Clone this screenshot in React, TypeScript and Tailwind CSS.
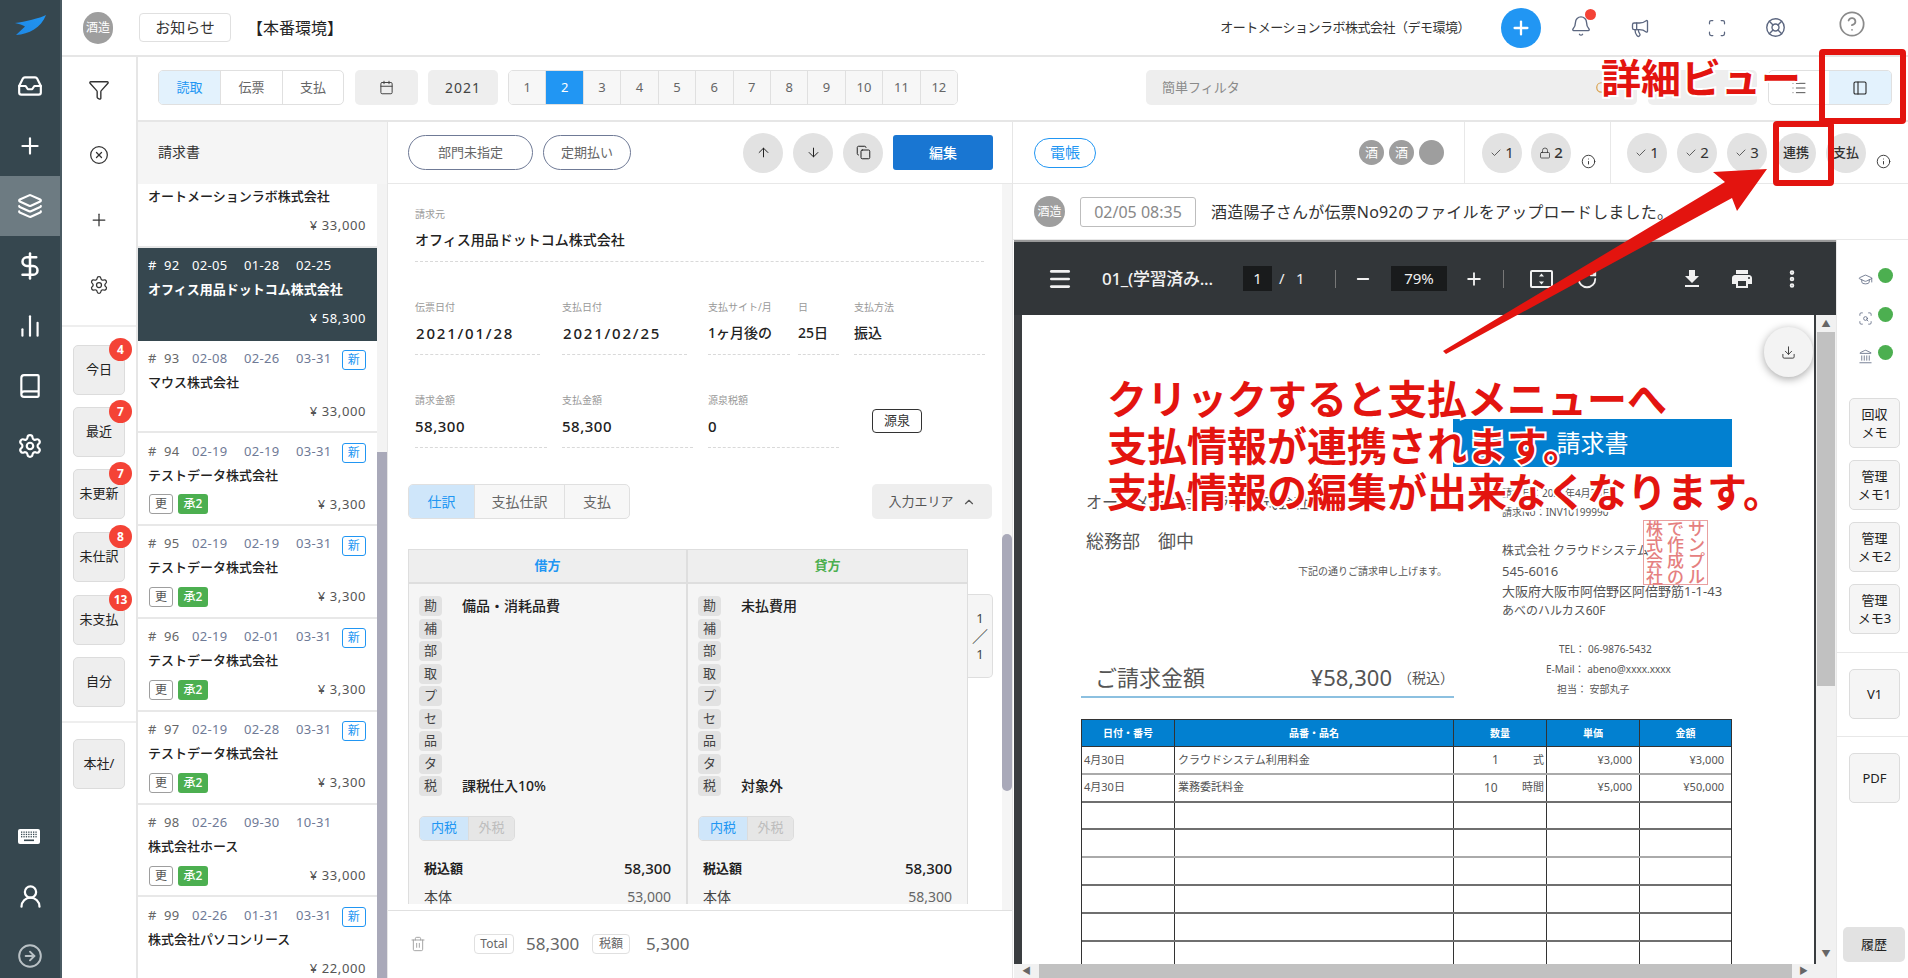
import React from "react";
import {
  Inbox, Plus, Layers, DollarSign, ChartNoAxesColumn, Book, Settings, UserRound, CircleArrowRight,
  Funnel, CircleX, Calendar, ArrowUp, ArrowDown, Copy, ChevronUp, Trash2, Bell, Megaphone, Scan, LifeBuoy,
  CircleHelp, List, PanelLeft, Check, Lock, Info, GraduationCap, ScanSearch, Landmark, Download, Menu, Minus,
  RotateCw, EllipsisVertical, Search,
} from "lucide-react";

const Logo = () => (
  <svg width="31" height="20" viewBox="0 0 31 20">
    <defs>
      <linearGradient id="lg" x1="0" y1="1" x2="1" y2="0">
        <stop offset="0" stopColor="#1e88e5" />
        <stop offset="1" stopColor="#2196f3" />
      </linearGradient>
    </defs>
    <path d="M31 0C25 3 10 7 0 8c4 1 8 2 10 3.500L1 20C14 19 26 13 31 0Z" fill="url(#lg)" />
  </svg>
);

const KeyboardIcon = () => (
  <svg width="22" height="15" viewBox="0 0 22 15">
    <rect width="22" height="15" rx="2" fill="#ffffff" />
    {[0, 1, 2].map((r) =>
      [0, 1, 2, 3, 4, 5, 6].map((c) => (
        <rect key={`${r}-${c}`} x={3 + c * 2.4} y={2.5 + r * 2.3} width="1.300" height="1.300" fill="#36474f" />
      ))
    )}
    <rect x="6" y="10.500" width="10" height="1.600" fill="#36474f" />
  </svg>
);

const railTop = [Inbox, Plus, Layers, DollarSign, ChartNoAxesColumn, Book, Settings];

function Rail() {
  return (
    <div className="w-[62px] shrink-0 bg-[#36474f] border-r-2 border-r-[#4a5a62] flex flex-col text-white">
      <div className="h-[56px] flex items-center justify-center pb-[6px]"><Logo /></div>
      {railTop.map((I, i) => (
        <div key={i} className={`h-[60px] flex items-center justify-center ${i === 2 ? "bg-[#6d7b82]" : ""}`}>
          <I size={i === 3 ? 30 : 26} strokeWidth={2} />
        </div>
      ))}
      <div className="mt-auto h-[60px] flex items-center justify-center pr-[2px]"><KeyboardIcon /></div>
      <div className="h-[60px] flex items-center justify-center"><UserRound size={27} strokeWidth={2} /></div>
      <div className="h-[52px] flex justify-center pt-[17px] text-[#b9c1c5]"><CircleArrowRight size={26} strokeWidth={1.8} /></div>
    </div>
  );
}

function TopHeader() {
  return (
    <div className="h-[57px] shrink-0 border-b-2 border-[#e6e6e6] flex items-center bg-white">
      <div className="ml-[21px] w-[30px] h-[32px] rounded-full bg-[#9e9e9e] text-white text-[12px] flex items-center justify-center">酒造</div>
      <div className="ml-[26px] w-[92px] h-[29px] border border-[#e0e0e0] rounded-[4px] text-[15px] text-[#333] flex items-center justify-center">お知らせ</div>
      <div className="ml-[16px] w-[96px] text-[16px] text-[#222] whitespace-nowrap">【本番環境】</div>
      <div className="ml-auto text-[13px] text-[#333] tracking-[-0.5px] mr-[31px]">オートメーションラボ株式会社（デモ環境）</div>
      <div className="w-[40px] h-[40px] rounded-full bg-[#2196f3] text-white flex items-center justify-center"><Plus size={22} strokeWidth={2.5} /></div>
      <div className="ml-[29px] mb-[3px] relative text-[#5c6780]">
        <Bell size={22} strokeWidth={1.5} />
        <span className="absolute -top-[6px] left-[15px] w-[11px] h-[11px] rounded-full bg-[#f44336]" />
      </div>
      <Megaphone size={20} strokeWidth={1.6} className="ml-[38px] text-[#5c6780]" />
      <Scan size={20} strokeWidth={1.5} className="ml-[57px] text-[#5c6780]" />
      <LifeBuoy size={21} strokeWidth={1.6} className="ml-[38px] text-[#5c6780]" />
      <CircleHelp size={28} strokeWidth={1.5} className="ml-[52px] mr-[42px] mb-[8px] text-[#8a8a8a]" />
    </div>
  );
}

const filters: [string, number | null, string][] = [
  ["今日", 4, "mt-[18px]"],
  ["最近", 7, "mt-[12px]"],
  ["未更新", 7, "mt-[12px]"],
  ["未仕訳", 8, "mt-[13px]"],
  ["未支払", 13, "mt-[13px]"],
  ["自分", null, "mt-[12px]"],
];

function FilterBtn({ label, n, cls }: { label: string; n: number | null; cls: string }) {
  return (
    <div className={`relative w-[52px] h-[50px] bg-[#eeeeee] border border-[#dcdcdc] rounded-[5px] text-[13px] text-[#222] flex items-center justify-center ${cls}`}>
      {label}
      {n !== null && (
        <span className="absolute -top-[8px] -right-[8px] w-[23px] h-[23px] rounded-full bg-[#f44336] text-white text-[12px] font-bold flex items-center justify-center">{n}</span>
      )}
    </div>
  );
}

function SideFilters() {
  return (
    <div className="w-[76px] shrink-0 border-r-2 border-[#e6e6e6] flex flex-col">
      <div className="h-[270px] border-b-2 border-[#eeeeee] flex flex-col items-center text-[#333] shrink-0">
        <div className="h-[65px] flex items-center justify-center"><Funnel size={22} strokeWidth={1.5} /></div>
        <div className="h-[65px] flex items-center justify-center"><CircleX size={20} strokeWidth={1.5} /></div>
        <div className="h-[66px] flex items-center justify-center"><Plus size={20} strokeWidth={1.5} /></div>
        <div className="h-[64px] flex items-center justify-center"><Settings size={20} strokeWidth={1.5} /></div>
      </div>
      <div className="pl-[11px] h-[396px] border-b-2 border-[#eeeeee] shrink-0">
        {filters.map(([l, n, c]) => <FilterBtn key={l} label={l} n={n} cls={c} />)}
      </div>
      <div className="pl-[11px]"><FilterBtn label="本社/" n={null} cls="mt-[16px]" /></div>
    </div>
  );
}

function Toolbar() {
  return (
    <div className="h-[65px] shrink-0 border-b-2 border-[#e6e6e6] flex items-center pb-[2px] text-[13px]">
      <div className="ml-[20px] flex h-[35px] w-[186px] border border-[#e0e0e0] rounded-[5px] overflow-hidden text-[#666]">
        <div className="w-[62px] bg-[#e3f2fd] text-[#2196f3] flex items-center justify-center border-r border-[#e0e0e0]">読取</div>
        <div className="w-[62px] flex items-center justify-center border-r border-[#e0e0e0]">伝票</div>
        <div className="flex-1 flex items-center justify-center">支払</div>
      </div>
      <div className="ml-[11px] w-[63px] h-[35px] rounded-[5px] bg-[#eeeeee] flex items-center justify-center text-[#444]"><Calendar size={15} strokeWidth={1.6} /></div>
      <div className="ml-[10px] w-[70px] h-[35px] rounded-[5px] bg-[#eeeeee] flex items-center justify-center text-[#444] tracking-[1px] text-[14px]">2021</div>
      <div className="ml-[10px] flex h-[35px] w-[450px] border border-[#e0e0e0] rounded-[5px] overflow-hidden text-[#666]">
        {Array.from({ length: 12 }, (_, i) => (
          <div key={i} className={`flex-1 flex items-center justify-center border-r last:border-r-0 border-[#e0e0e0] ${i === 1 ? "bg-[#2196f3] text-white" : "bg-[#f7f7f7]"}`}>{i + 1}</div>
        ))}
      </div>
      <div className="ml-[188px] w-[491px] h-[35px] rounded-[5px] bg-[#eeeeee] flex items-center pl-[16px] pr-[28px] text-[#8a8a8a]">
        簡単フィルタ
        <Search size={14} strokeWidth={2} className="ml-auto text-[#d9a04a]" />
      </div>
      <div className="ml-[11px] w-[109px] h-[35px] rounded-[5px] bg-[#eeeeee]" />
      <div className="ml-[11px] flex h-[35px] w-[124px] border border-[#e0e0e0] rounded-[5px] overflow-hidden">
        <div className="w-[60px] flex items-center justify-center text-[#555]"><List size={16} strokeWidth={1.5} /></div>
        <div className="flex-1 bg-[#e3f2fd] flex items-center justify-center text-[#222]"><PanelLeft size={16} strokeWidth={1.6} /></div>
      </div>
    </div>
  );
}

type Item = { no: number; d: [string, string, string]; name: string; amt: string; isNew?: boolean; chips?: boolean; partial?: boolean };
const items: Item[] = [
  { no: 93, d: ["02-08", "02-26", "03-31"], name: "マウス株式会社", amt: "33,000", isNew: true },
  { no: 94, d: ["02-19", "02-19", "03-31"], name: "テストデータ株式会社", amt: "3,300", isNew: true, chips: true },
  { no: 95, d: ["02-19", "02-19", "03-31"], name: "テストデータ株式会社", amt: "3,300", isNew: true, chips: true },
  { no: 96, d: ["02-19", "02-01", "03-31"], name: "テストデータ株式会社", amt: "3,300", isNew: true, chips: true },
  { no: 97, d: ["02-19", "02-28", "03-31"], name: "テストデータ株式会社", amt: "3,300", isNew: true, chips: true },
  { no: 98, d: ["02-26", "09-30", "10-31"], name: "株式会社ホース", amt: "33,000", chips: true },
  { no: 99, d: ["02-26", "01-31", "03-31"], name: "株式会社パソコンリース", amt: "22,000", isNew: true },
];

function ListItem({ it, sel }: { it: Item; sel?: boolean }) {
  return (
    <div className={`h-[92.8px] shrink-0 px-[10px] pr-[11px] pt-[8px] border-b-2 ${sel ? "bg-[#36474f] border-[#36474f] text-white" : "border-[#e8e8e8] text-[#222]"}`}>
      <div className={`h-[20px] flex items-center text-[13px] tracking-[0.3px] ${sel ? "text-white" : "text-[#6f7a96]"}`}>
        {!it.partial && (
          <>
            <span className={`w-[44px] whitespace-pre ${sel ? "" : "text-[#666]"}`}>#  {it.no}</span>
            <span className="w-[52px]">{it.d[0]}</span>
            <span className="w-[52px]">{it.d[1]}</span>
            <span>{it.d[2]}</span>
          </>
        )}
        {it.isNew && <span className="ml-auto w-[24px] h-[20px] mt-[3px] border border-[#2196f3] rounded-[3px] text-[#2196f3] text-[12px] flex items-center justify-center">新</span>}
      </div>
      <div className={`mt-[4px] h-[20px] flex items-center text-[13px] ${sel ? "font-bold" : "font-medium"}`}>{it.name}</div>
      <div className="mt-[9px] h-[20px] flex items-center">
        {it.chips && (
          <>
            <span className="ml-[1px] w-[24px] h-[20px] border border-[#9e9e9e] rounded-[3px] text-[#555] text-[12px] flex items-center justify-center">更</span>
            <span className="ml-[5px] w-[30px] h-[20px] rounded-[3px] bg-[#4caf50] text-white text-[12px] font-medium flex items-center justify-center">承2</span>
          </>
        )}
        <span className={`ml-auto text-[13px] tracking-[0.6px] whitespace-pre ${sel ? "text-white" : "text-[#555]"}`}>¥ {it.amt}</span>
      </div>
    </div>
  );
}

function ListPanel() {
  return (
    <div className="w-[250px] shrink-0 flex flex-col border-r border-[#e6e6e6]">
      <div className="h-[62px] shrink-0 bg-[#f5f5f5] flex items-center pl-[20px] text-[14px] text-[#333] pb-[4px]">請求書</div>
      <div className="flex-1 flex overflow-hidden">
        <div className="w-[239px] shrink-0 overflow-hidden flex flex-col">
          <div className="-mt-[29px]">
            <ListItem it={{ no: 91, d: ["", "", ""], name: "オートメーションラボ株式会社", amt: "33,000", partial: true }} />
          </div>
          <ListItem sel it={{ no: 92, d: ["02-05", "01-28", "02-25"], name: "オフィス用品ドットコム株式会社", amt: "58,300" }} />
          {items.map((it) => <ListItem key={it.no} it={it} />)}
        </div>
        <div className="w-[10px] bg-[#f3f3f3] flex flex-col">
          <div className="h-[268px] shrink-0" />
          <div className="flex-1 bg-[#a9a9b9]" />
        </div>
      </div>
    </div>
  );
}

function Field({ label, value, w, cls = "", vcls = "" }: { label: string; value: string; w: string; cls?: string; vcls?: string }) {
  return (
    <div className={`${w} ${cls} border-b border-dashed border-[#d9d9d9] h-[55px] shrink-0`}>
      <div className="h-[14px] text-[10px] leading-[14px] text-[#999]">{label}</div>
      <div className={`mt-[9px] h-[20px] text-[14px] leading-[20px] font-medium text-[#222] whitespace-nowrap ${vcls}`}>{value}</div>
    </div>
  );
}

const chips = ["勘", "補", "部", "取", "プ", "セ", "品", "タ", "税"];

function SideCol({ head, color, a, b, tax, body, left }: { head: string; color: string; a: string; b: string; tax: string; body: string; left?: boolean }) {
  return (
    <div className={`w-[280px] ${left ? "border-r-2 border-[#dedede]" : ""}`}>
      <div className={`h-[34px] bg-[#eeeeee] border-b-2 border-[#dedede] text-[13px] font-bold flex items-center justify-center ${color}`}>{head}</div>
      <div className="pl-[10px] pr-[14px] pt-[12px] h-[320px] bg-[#f5f5f5] overflow-hidden">
        {chips.map((c, i) => (
          <div key={c} className="h-[22.500px] flex items-start">
            <span className="w-[23px] h-[20px] rounded-[4px] bg-[#e2e2e2] text-[#444] text-[13px] flex items-center justify-center">{c}</span>
            {i === 0 && <span className="ml-[20px] text-[14px] font-medium leading-[20px] text-[#222]">{a}</span>}
            {i === 8 && <span className="ml-[20px] text-[14px] font-medium leading-[20px] text-[#222]">{b}</span>}
          </div>
        ))}
        <div className="mt-[17px] flex w-[96px] h-[25px] border border-[#dcdcdc] rounded-[5px] overflow-hidden text-[13px]">
          <div className="w-[48px] bg-[#cfe6fa] text-[#2196f3] flex items-center justify-center">内税</div>
          <div className="flex-1 bg-[#e6e6e6] text-[#bdbdbd] flex items-center justify-center border-l border-[#dcdcdc]">外税</div>
        </div>
        <div className="mt-[18px] h-[20px] pl-[5px] pr-[1px] flex items-center justify-between text-[13px] font-medium text-[#222]">
          <span className="font-bold">税込額</span><span className="text-[15px]">{tax}</span>
        </div>
        <div className="mt-[8px] h-[20px] pl-[5px] pr-[1px] flex items-center justify-between text-[14px] text-[#444]">
          <span>本体</span><span className="text-[#666]">{body}</span>
        </div>
      </div>
    </div>
  );
}

function DetailPanel() {
  return (
    <div className="w-[625px] shrink-0 flex flex-col border-r border-[#e6e6e6]">
      <div className="h-[62px] shrink-0 border-b border-[#e8e8e8] flex items-center pl-[20px] pr-[19px]">
        <div className="w-[125px] h-[35px] rounded-full border border-[#6f7a96] text-[13px] text-[#666] flex items-center justify-center">部門未指定</div>
        <div className="ml-[10px] w-[88px] h-[35px] rounded-full border border-[#6f7a96] text-[13px] text-[#666] flex items-center justify-center">定期払い</div>
        {[ArrowUp, ArrowDown, Copy].map((I, i) => (
          <div key={i} className={`${i === 0 ? "ml-auto" : "ml-[10px]"} w-[40px] h-[40px] rounded-full bg-[#e2e2e2] flex items-center justify-center text-[#222]`}><I size={15} strokeWidth={1.6} /></div>
        ))}
        <div className="ml-[10px] w-[100px] h-[35px] rounded-[3px] bg-[#1976d2] text-white text-[14px] font-medium flex items-center justify-center">編集</div>
      </div>
      <div className="flex-1 flex overflow-hidden">
        <div className="flex-1 overflow-hidden relative">
          <div className="pl-[27px] pr-[18px] pt-[23px]">
            <Field label="請求元" value="オフィス用品ドットコム株式会社" w="w-full" />
            <div className="mt-[38px] flex">
              <Field label="伝票日付" value="2021/01/28" w="w-[125px]" vcls="text-[15px] tracking-[1.8px] pl-[1px]" />
              <Field label="支払日付" value="2021/02/25" w="w-[125px]" cls="ml-[22px]" vcls="text-[15px] tracking-[1.8px] pl-[1px]" />
              <Field label="支払サイト/月" value="1ヶ月後の" w="w-[82px]" cls="ml-[21px]" />
              <Field label="日" value="25日" w="w-[41px]" cls="ml-[8px]" />
              <Field label="支払方法" value="振込" w="w-[131px]" cls="ml-[15px]" />
            </div>
            <div className="mt-[38px] flex">
              <Field label="請求金額" value="58,300" w="w-[132px]" vcls="text-[15px] tracking-[0.5px]" />
              <Field label="支払金額" value="58,300" w="w-[131px]" cls="ml-[15px]" vcls="text-[15px] tracking-[0.5px]" />
              <Field label="源泉税額" value="0" w="w-[131px]" cls="ml-[15px]" vcls="text-[15px]" />
              <div className="ml-[33px] mt-[16px] w-[50px] h-[24px] border border-[#333] rounded-[4px] text-[13px] text-[#333] flex items-center justify-center">源泉</div>
            </div>
          </div>
          <div className="mt-[36px] ml-[20px] mr-[10px] flex justify-between">
            <div className="flex w-[222px] h-[35px] border border-[#e0e0e0] rounded-[5px] overflow-hidden text-[14px] text-[#666] bg-[#f7f7f7]">
              <div className="w-[65px] bg-[#cfe6fa] text-[#2196f3] flex items-center justify-center">仕訳</div>
              <div className="w-[91px] flex items-center justify-center border-x border-[#e0e0e0]">支払仕訳</div>
              <div className="flex-1 flex items-center justify-center">支払</div>
            </div>
            <div className="w-[120px] h-[35px] rounded-[5px] bg-[#eeeeee] text-[13px] text-[#555] flex items-center justify-center gap-[8px]">入力エリア<ChevronUp size={14} /></div>
          </div>
          <div className="relative mt-[30px] ml-[20px] flex w-[560px] border-t border-x border-[#dedede]">
            <SideCol left head="借方" color="text-[#2196f3]" a="備品・消耗品費" b="課税仕入10%" tax="58,300" body="53,000" />
            <SideCol head="貸方" color="text-[#4caf50]" a="未払費用" b="対象外" tax="58,300" body="58,300" />
            <div className="absolute -right-[26px] top-[44px] w-[25px] h-[84px] bg-[#f5f5f5] border border-l-0 border-[#dedede] rounded-r-[5px] text-[13px] text-[#444] flex flex-col items-center justify-center leading-[18px]">
              <span>1</span><span className="text-[16px]">／</span><span>1</span>
            </div>
          </div>
        </div>
        <div className="w-[10px] bg-[#f5f5f5] flex flex-col">
          <div className="h-[350px] shrink-0" />
          <div className="h-[257px] bg-[#a9a9b9] rounded-full" />
        </div>
      </div>
      <div className="h-[68px] shrink-0 border-t border-[#e0e0e0] flex items-center pl-[22px] pb-[2px] text-[#666]">
        <Trash2 size={16} strokeWidth={1.4} className="text-[#9e9e9e]" />
        <div className="ml-[48px] w-[40px] h-[20px] border border-[#e0e0e0] rounded-[4px] text-[12px] flex items-center justify-center">Total</div>
        <div className="ml-[12px] text-[17px] w-[55px] whitespace-nowrap">58,300</div>
        <div className="ml-[11px] w-[38px] h-[20px] border border-[#e0e0e0] rounded-[4px] text-[12px] flex items-center justify-center">税額</div>
        <div className="ml-[16px] text-[17px]">5,300</div>
      </div>
    </div>
  );
}

const Round = ({ children, cls = "" }: { children: React.ReactNode; cls?: string }) => (
  <div className={`w-[40px] h-[40px] rounded-full bg-[#e2e2e2] flex items-center justify-center text-[13px] text-[#333] gap-[3px] shrink-0 ${cls}`}>{children}</div>
);

function ActionRow() {
  return (
    <div className="h-[62px] shrink-0 border-b border-[#e8e8e8] flex items-center">
      <div className="ml-[21px] w-[62px] h-[30px] rounded-full border border-[#2196f3] text-[#2196f3] text-[15px] flex items-center justify-center">電帳</div>
      <div className="ml-auto flex items-center gap-[5px] mr-[20px]">
        <span className="w-[25px] h-[25px] rounded-full bg-[#9e9e9e] text-white text-[13px] flex items-center justify-center">酒</span>
        <span className="w-[25px] h-[25px] rounded-full bg-[#9e9e9e] text-white text-[13px] flex items-center justify-center">酒</span>
        <span className="w-[25px] h-[25px] rounded-full bg-[#9e9e9e]" />
      </div>
      <div className="w-[147px] h-full border-x border-[#e8e8e8] flex items-center pl-[17px] relative shrink-0">
        <Round cls="text-[15px]"><Check size={12} strokeWidth={1.5} />1</Round>
        <Round cls="ml-[9px] text-[15px] font-medium"><Lock size={12} strokeWidth={1.5} />2</Round>
        <Info size={15} strokeWidth={1.5} className="ml-[10px] mt-[17px] text-[#333]" />
      </div>
      <div className="w-[297px] h-full flex items-center pl-[16px] shrink-0">
        <Round cls="text-[15px]"><Check size={12} strokeWidth={1.5} />1</Round>
        <Round cls="ml-[10px] text-[15px]"><Check size={12} strokeWidth={1.5} />2</Round>
        <Round cls="ml-[10px] text-[15px]"><Check size={12} strokeWidth={1.5} />3</Round>
        <Round cls="ml-[9px] font-medium">連携</Round>
        <Round cls="ml-[10px] font-medium">支払</Round>
        <Info size={15} strokeWidth={1.5} className="ml-[10px] mt-[17px] text-[#333]" />
      </div>
    </div>
  );
}

function LogRow() {
  return (
    <div className="h-[56px] shrink-0 border-b border-[#e8e8e8] flex items-center pl-[21px]">
      <div className="w-[31px] h-[31px] rounded-full bg-[#9e9e9e] text-white text-[12px] flex items-center justify-center">酒造</div>
      <div className="ml-[15px] w-[116px] h-[30px] border border-[#bdbdbd] rounded-[3px] text-[16px] text-[#888] flex items-center justify-center whitespace-nowrap">02/05 08:35</div>
      <div className="ml-[15px] text-[16px] text-[#333] tracking-[0.2px] whitespace-nowrap">酒造陽子さんが伝票No92のファイルをアップロードしました。</div>
    </div>
  );
}

const FitIcon = () => (
  <svg width="23" height="18" viewBox="0 0 23 18" fill="none">
    <rect x="1" y="1" width="21" height="16" rx="1" stroke="#f1f1f1" strokeWidth="2" />
    <path d="M11.500 3.500l2.500 3h-5zM11.500 14.500l2.500-3h-5z" fill="#f1f1f1" />
  </svg>
);

const DownloadFilled = () => (
  <svg width="24" height="24" viewBox="0 0 24 24" fill="#f1f1f1"><path d="M19 9h-4V3H9v6H5l7 7 7-7zM5 18v2h14v-2H5z" /></svg>
);

const PrintFilled = () => (
  <svg width="24" height="24" viewBox="0 0 24 24" fill="#f1f1f1">
    <path d="M19 8H5c-1.660 0-3 1.340-3 3v6h4v4h12v-4h4v-6c0-1.660-1.340-3-3-3zm-3 11H8v-5h8v5zm3-7c-.55 0-1-.45-1-1s.45-1 1-1 1 .45 1 1-.45 1-1 1zm-1-9H6v4h12V3z" />
  </svg>
);

function PdfBar() {
  return (
    <div className="h-[73px] shrink-0 bg-[#323639] text-[#f1f1f1] flex items-center relative">
      <Menu size={26} strokeWidth={2.5} className="ml-[33px] shrink-0" />
      <span className="ml-[29px] w-[129px] shrink-0 text-[17px] font-medium whitespace-nowrap tracking-[-0.3px]">01_(学習済み...</span>
      <span className="ml-[12px] w-[29px] h-[25px] shrink-0 bg-[#191b1c] flex items-center justify-center text-[15px]">1</span>
      <span className="ml-[7px] w-[5px] shrink-0 text-[15px]">/</span>
      <span className="ml-[12px] w-[8px] shrink-0 text-[15px]">1</span>
      <span className="ml-[31px] w-px h-[18px] shrink-0 bg-[#777]" />
      <Minus size={18} strokeWidth={2.5} className="ml-[18px] shrink-0" />
      <span className="ml-[19px] w-[56px] h-[25px] shrink-0 bg-[#191b1c] flex items-center justify-center text-[15px]">79%</span>
      <Plus size={20} strokeWidth={2.2} className="ml-[17px] shrink-0" />
      <span className="ml-[19px] w-px h-[18px] shrink-0 bg-[#777]" />
      <span className="ml-[26px] shrink-0"><FitIcon /></span>
      <RotateCw size={22} strokeWidth={2} className="ml-[23px] shrink-0" />
      <span className="ml-[82px] shrink-0"><DownloadFilled /></span>
      <span className="ml-[26px] shrink-0"><PrintFilled /></span>
      <EllipsisVertical size={22} strokeWidth={3} className="ml-[27px] shrink-0" />
    </div>
  );
}

const rows: [string, string, string, string, string, string][] = [
  ["4月30日", "クラウドシステム利用料金", "1", "式", "¥3,000", "¥3,000"],
  ["4月30日", "業務委託料金", "10", "時間", "¥5,000", "¥50,000"],
  ["", "", "", "", "", ""], ["", "", "", "", "", ""], ["", "", "", "", "", ""],
  ["", "", "", "", "", ""], ["", "", "", "", "", ""], ["", "", "", "", "", ""],
];

function InvoiceTable() {
  return (
    <div className="mt-[20px] w-[651px] border-x border-[#333] text-[11px] text-[#555]">
      <div className="h-[28px] flex bg-[#0280d0] border-y border-[#333] text-white font-bold text-[10px]">
        {[["日付・番号", "w-[93px]"], ["品番・品名", "w-[279px]"], ["数量", "w-[93px]"], ["単価", "w-[93px]"], ["金額", "flex-1"]].map(([t, w]) => (
          <div key={t} className={`${w} flex items-center justify-center border-r last:border-r-0 border-[#333]`}>{t}</div>
        ))}
      </div>
      {rows.map((r, i) => (
        <div key={i} className={`h-[27.800px] flex border-b-2 ${i === 0 || i === 3 ? "border-[#aaaaaa]" : "border-[#6f6f6f]"}`}>
          <div className="w-[93px] pl-[2px] flex items-center border-r border-[#333]">{r[0]}</div>
          <div className="w-[279px] pl-[3px] flex items-center border-r border-[#333]">{r[1]}</div>
          <div className="w-[93px] flex items-center border-r border-[#333]">
            <span className={`${i === 1 ? "ml-[30px]" : "ml-[38px]"} text-[12px]`}>{r[2]}</span>
            <span className="ml-auto pr-[2px]">{r[3]}</span>
          </div>
          <div className="w-[93px] pr-[7px] flex items-center justify-end border-r border-[#333]">{r[4]}</div>
          <div className="flex-1 pr-[7px] flex items-center justify-end">{r[5]}</div>
        </div>
      ))}
    </div>
  );
}

function Invoice() {
  return (
    <div className="flex-1 bg-white relative overflow-hidden pl-[59px] text-[#555]">
      <div className="absolute right-[1px] top-[12px] w-[49px] h-[50px] rounded-full bg-[#f3f3f3] shadow-[0_2px_8px_rgba(0,0,0,0.35)] flex items-center justify-center text-[#444]"><Download size={15} strokeWidth={1.6} /></div>
      <div className="ml-[372px] mt-[104px] w-[279px] h-[48px] bg-[#0280d0] text-white text-[24px] flex items-center justify-center">請求書</div>
      <div className="flex">
        <div className="w-[421px] shrink-0">
          <div className="mt-[23px] ml-[5px] h-[24px] text-[16px] leading-[24px] whitespace-nowrap">オートメーションラボ株式会社</div>
          <div className="mt-[15px] ml-[5px] h-[24px] text-[18px] leading-[24px]">総務部　御中</div>
          <div className="mt-[11px] ml-[217px] h-[14px] text-[10px] leading-[14px] whitespace-nowrap">下記の通りご請求申し上げます。</div>
          <div className="mt-[84px] w-[373px] h-[36px] border-b-2 border-[#8cc0e0] flex items-center pl-[14px] pb-[3px] whitespace-nowrap">
            <span className="text-[22px] w-[219px]">ご請求金額</span>
            <span className="text-[22px]">¥58,300</span>
            <span className="ml-[6px] text-[14px]">（税込）</span>
          </div>
        </div>
        <div className="relative text-[12px] leading-[20px]">
          <div className="mt-[16px] h-[19px] text-[10px]">請求日：2021年4月30日</div>
          <div className="h-[19px] text-[10px]">請求No：INV10199990</div>
          <div className="mt-[20px] h-[20px]">株式会社 クラウドシステム</div>
          <div className="h-[20px] text-[13px]">545-6016</div>
          <div className="h-[20px] text-[13px] whitespace-nowrap">大阪府大阪市阿倍野区阿倍野筋1-1-43</div>
          <div className="h-[20px]">あべのハルカス60F</div>
          <div className="mt-[18px] ml-[57px] h-[20px] text-[10px]">TEL： 06-9876-5432</div>
          <div className="ml-[44px] h-[20px] text-[10px] whitespace-nowrap">E-Mail： abeno@xxxx.xxxx</div>
          <div className="ml-[55px] h-[20px] text-[10px]">担当： 安部丸子</div>
          <div className="absolute left-[141px] top-[53px] w-[65px] h-[65px] border border-[#e9a0a0] text-[#e58080] text-[17px] leading-[16px] font-medium grid grid-cols-3 place-items-center">
            {["株", "で", "サ", "式", "作", "ン", "会", "成", "プ", "社", "の", "ル"].map((c, i) => <span key={i}>{c}</span>)}
          </div>
        </div>
      </div>
      <InvoiceTable />
    </div>
  );
}

function PdfView() {
  return (
    <div className="w-[822px] ml-[1px] shrink-0 flex flex-col border-t-2 border-[#999] overflow-hidden">
      <PdfBar />
      <div className="flex-1 flex overflow-hidden bg-[#3a3d40]">
        <div className="w-[8px] shrink-0" />
        <Invoice />
        <div className="w-[2px] shrink-0" />
        <div className="w-[20px] shrink-0 bg-[#f1f1f1] flex flex-col items-center text-[#666] text-[9px] leading-[17px]">
          <span>▲</span>
          <div className="w-[18px] h-[354px] bg-[#c1c1c1]" />
          <span className="mt-auto mb-[2px]">▼</span>
        </div>
      </div>
      <div className="h-[14px] shrink-0 bg-[#f1f1f1] flex items-center text-[#666] text-[9px]">
        <span className="w-[25px] text-center">◀</span>
        <div className="w-[753px] h-[14px] bg-[#c1c1c1]" />
        <span className="ml-[7px]">▶</span>
      </div>
    </div>
  );
}

const Memo = ({ children, cls = "" }: { children: React.ReactNode; cls?: string }) => (
  <div className={`w-[51px] h-[50px] bg-[#f5f5f5] border border-[#dcdcdc] rounded-[5px] text-[13px] text-[#222] leading-[18px] flex items-center justify-center text-center ${cls}`}>{children}</div>
);

function StatusRail() {
  const st = [GraduationCap, ScanSearch, Landmark];
  return (
    <div className="flex-1 border-l border-[#e8e8e8] flex flex-col items-start">
      <div className="pt-[27px] pl-[21px] h-[158px] shrink-0">
        {st.map((I, i) => (
          <div key={i} className="h-[38.500px] flex items-start gap-[5px]">
            <I size={15} strokeWidth={1.3} className="text-[#5c6780] mt-[5px]" />
            <span className="w-[15px] h-[15px] rounded-full bg-[#4caf50] mt-[1px]" />
          </div>
        ))}
      </div>
      <div className="pl-[12px] flex flex-col gap-[12px] h-[255px] w-full border-b border-[#e8e8e8] shrink-0">
        <Memo><span>回収<br />メモ</span></Memo>
        <Memo><span>管理<br />メモ1</span></Memo>
        <Memo><span>管理<br />メモ2</span></Memo>
        <Memo><span>管理<br />メモ3</span></Memo>
      </div>
      <div className="pl-[12px] pt-[16px] h-[84px] w-full border-b border-[#e8e8e8] shrink-0"><Memo>V1</Memo></div>
      <div className="pl-[12px] pt-[16px]"><Memo>PDF</Memo></div>
      <div className="ml-[6px] mt-[124px] w-[62px] h-[35px] bg-[#e2e2e2] rounded-[5px] text-[13px] text-[#222] flex items-center justify-center">履歴</div>
    </div>
  );
}

function RightPanel() {
  return (
    <div className="flex-1 flex flex-col min-w-0">
      <ActionRow />
      <LogRow />
      <div className="flex-1 flex overflow-hidden">
        <PdfView />
        <StatusRail />
      </div>
    </div>
  );
}

const outline = "[paint-order:stroke_fill] [-webkit-text-stroke:4px_#ffffff]";

function Annotations() {
  return (
    <>
      <div className="absolute left-[1819px] top-[49px] w-[87px] h-[75px] border-[6px] border-[#e3140f] rounded-[4px]" />
      <div className="absolute left-[1773px] top-[121px] w-[61px] h-[65px] border-[6px] border-[#e3140f] rounded-[4px]" />
      <div className={`absolute left-[1601px] top-[54px] text-[40px] leading-[48px] font-bold text-[#e3140f] whitespace-nowrap ${outline}`}>詳細ビュー</div>
      <svg className="absolute left-0 top-0 pointer-events-none" width="1908" height="400" viewBox="0 0 1908 400">
        <polygon points="1443,351 1725,182 1713,172 1767,169 1737,211 1732,198 1446,354" fill="#e3140f" />
      </svg>
      <div className={`absolute left-[1107px] top-[376px] text-[40px] leading-[46.500px] font-bold text-[#e3140f] whitespace-nowrap ${outline}`}>
        <div>クリックすると支払メニューへ</div>
        <div>支払情報が連携されます。</div>
        <div>支払情報の編集が出来なくなります。</div>
      </div>
    </>
  );
}

export default function App() {
  return (
    <div className="relative w-[1908px] h-[978px] overflow-hidden flex bg-white font-['Noto_Sans','Noto_Sans_CJK_JP',sans-serif]">
      <Rail />
      <div className="flex-1 flex flex-col min-w-0">
        <TopHeader />
        <div className="flex-1 flex min-h-0">
          <SideFilters />
          <div className="flex-1 flex flex-col min-w-0">
            <Toolbar />
            <div className="flex-1 flex min-h-0">
              <ListPanel />
              <DetailPanel />
              <RightPanel />
            </div>
          </div>
        </div>
      </div>
      <Annotations />
    </div>
  );
}
